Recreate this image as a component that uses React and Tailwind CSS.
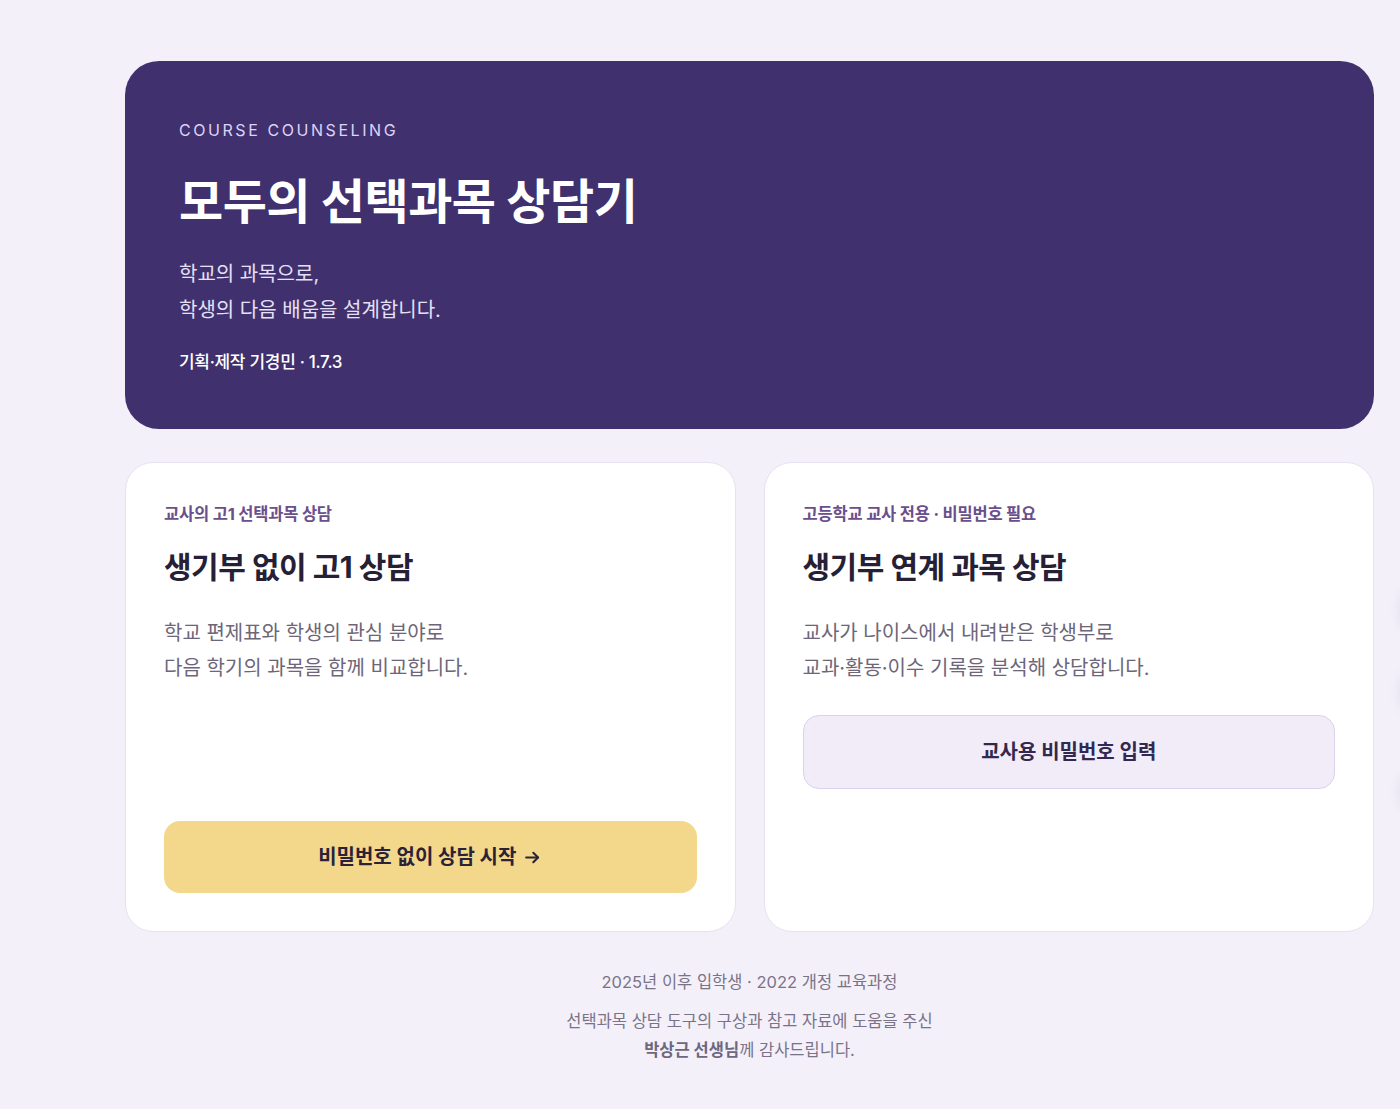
import React from 'react';

const font = { fontFamily: 'Inter, "Noto Sans CJK KR", "Noto Sans", sans-serif' };

function ModeCard({ label, title, lines, children }) {
  return (
    <div className="flex flex-col h-[470px] bg-white rounded-[28px] border border-[#e7e1f1] px-[38px] pt-[40px] pb-[38px]">
      <p className="text-[16.5px] font-bold text-[#6a4f8c] leading-[22px] tracking-[-0.2px]">{label}</p>
      <h2 className="mt-[22px] text-[30px] font-bold text-[#261f35] leading-[40px] tracking-[-0.5px]">{title}</h2>
      <p className="mt-[29px] text-[20px] text-[#6d6679] leading-[35px]">
        {lines[0]}
        <br />
        {lines[1]}
      </p>
      {children}
    </div>
  );
}

function App() {
  return (
    <div style={font} className="relative overflow-hidden min-h-screen bg-[#f3f0f9] pl-[125px] pr-[26px] pt-[61px] pb-[44px]">
      <section className="bg-[#40316e] rounded-[34px] h-[368px] px-[54px] pt-[57px]">
        <p className="text-[16px] tracking-[0.16em] text-[#dcd3f6] leading-[24px]">COURSE COUNSELING</p>
        <h1 className="mt-[30px] text-[48px] font-bold text-white leading-[60px] tracking-[-0.5px]">모두의 선택과목 상담기</h1>
        <p className="mt-[24px] text-[20px] text-[#e6e0f6] leading-[36px]">
          학교의 과목으로,
          <br />
          학생의 다음 배움을 설계합니다.
        </p>
        <p className="mt-[22px] text-[17px] font-medium text-white leading-[24px] tracking-[-0.3px]">기획·제작 기경민 · 1.7.3</p>
      </section>

      <div className="mt-[33px] grid grid-cols-2 gap-[28px]">
        <ModeCard
          label="교사의 고1 선택과목 상담"
          title="생기부 없이 고1 상담"
          lines={['학교 편제표와 학생의 관심 분야로', '다음 학기의 과목을 함께 비교합니다.']}
        >
          <button className="mt-auto h-[72px] w-full rounded-[16px] bg-[#f3d78b] text-[20px] font-bold text-[#2b2238] flex items-center justify-center gap-[7px]">
            비밀번호 없이 상담 시작
            <svg width="19" height="19" viewBox="0 0 24 24" fill="none" stroke="currentColor" strokeWidth="2.6" strokeLinecap="round" strokeLinejoin="round">
              <path d="M4 12h15" />
              <path d="M13 6l6 6-6 6" />
            </svg>
          </button>
        </ModeCard>

        <ModeCard
          label="고등학교 교사 전용 · 비밀번호 필요"
          title="생기부 연계 과목 상담"
          lines={['교사가 나이스에서 내려받은 학생부로', '교과·활동·이수 기록을 분석해 상담합니다.']}
        >
          <button className="mt-[29px] h-[74px] w-full rounded-[16px] bg-[#f2ecf9] border border-[#dcd2ec] text-[20px] font-bold text-[#33284f]">
            교사용 비밀번호 입력
          </button>
        </ModeCard>
      </div>

      <footer className="mt-[38px] text-center text-[#7a7388]">
        <p className="text-[16.5px] leading-[24px]">2025년 이후 입학생 · 2022 개정 교육과정</p>
        <p className="mt-[13px] text-[16.5px] leading-[29px]">
          선택과목 상담 도구의 구상과 참고 자료에 도움을 주신
          <br />
          <strong className="font-bold text-[#6e6780]">박상근 선생님</strong>께 감사드립니다.
        </p>
      </footer>

      <div className="absolute left-[1404px] top-[588px] w-[44px] h-[44px] rounded-full bg-white shadow-[0_0_16px_rgba(60,40,90,0.18)]" />
      <div className="absolute left-[1404px] top-[670px] w-[44px] h-[44px] rounded-full bg-white shadow-[0_0_16px_rgba(60,40,90,0.18)]" />
      <div className="absolute left-[1404px] top-[770px] w-[44px] h-[44px] rounded-full bg-white shadow-[0_0_16px_rgba(60,40,90,0.18)]" />
    </div>
  );
}

export default App;
